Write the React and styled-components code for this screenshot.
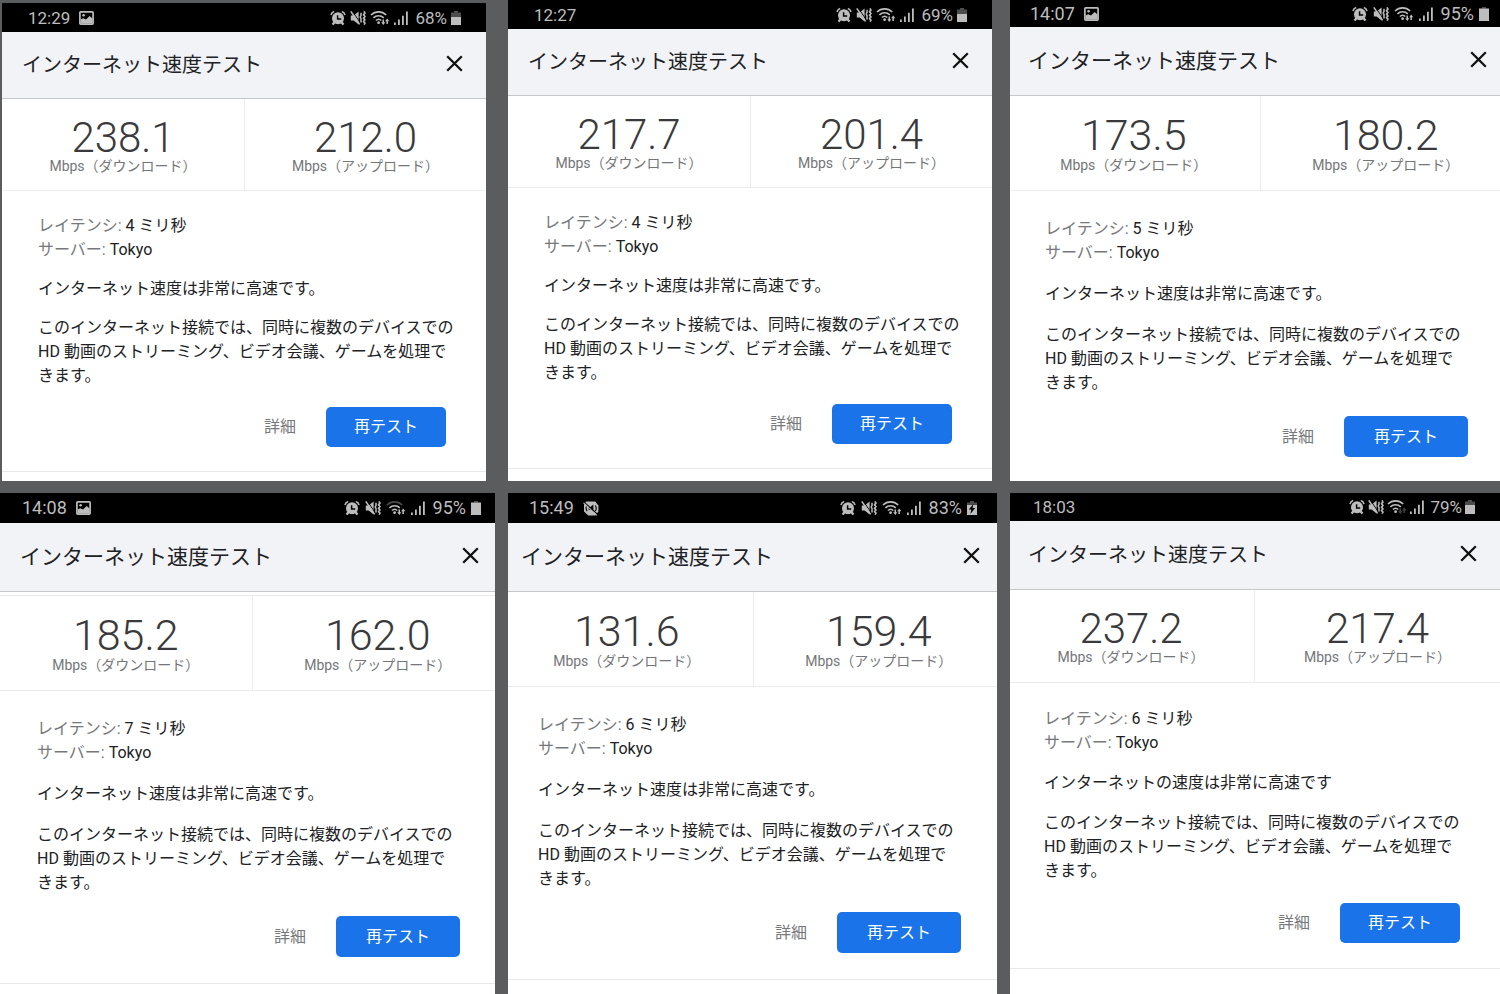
import React from 'react';
import styled, { createGlobalStyle, ThemeProvider } from 'styled-components';

const GlobalStyle = createGlobalStyle`
  * {
    box-sizing: border-box;
  }

  body {
    margin: 0;
    background: #5b5c5e;
    color: #202124;
    font-family: Roboto, 'Noto Sans CJK JP', sans-serif;
    font-size: 16px;
    line-height: 24px;
  }

  h2, h3, p, dl, dd {
    margin: 0;
    font-size: inherit;
    font-weight: 400;
  }

  button {
    border: 0;
    padding: 0;
    background: none;
    font: inherit;
    cursor: pointer;
  }
`;

const compact = {
  statusFont: 17,
  statusGap: 4,
  titleFont: 20,
  header: 67,
  side: 20,
  closeSide: 23,
  number: 42,
  numberLine: 37,
  labelLine: 20,
  resultsBottom: 14,
  bodyTop: 23,
  bodySide: 36,
  gap: 15,
  actionsTop: 19,
  actionsSide: 40,
  button: 40,
  buttonSide: 28,
  bodyBottom: 24,
};

const medium = {
  ...compact,
  statusGap: 3,
  header: 69,
  resultsBottom: 15,
  bodyTop: 24,
  gap: 16,
  actionsTop: 20,
  bodyBottom: 25,
};

const large = {
  statusFont: 18,
  statusGap: 5,
  titleFont: 21,
  header: 69,
  side: 20,
  closeSide: 24,
  number: 43,
  numberLine: 38,
  labelLine: 22,
  resultsBottom: 14,
  bodyTop: 26,
  bodySide: 37,
  gap: 17,
  actionsTop: 21,
  actionsSide: 43,
  button: 41,
  buttonSide: 30,
  bodyBottom: 26,
};

const Board = styled.main`
  display: grid;
  grid-template-rows: 481fr 501fr;
  gap: 12px;
  height: 100vh;
`;

const Row = styled.div`
  display: flex;
  min-height: 0;
`;

const Screen = styled.section`
  flex: ${p => p.$grow} 1 0;
  min-width: 0;
  margin-left: ${p => p.$gutter}px;
  margin-top: ${p => p.$top || 0}px;
  overflow: hidden;
  background: #fff;
`;

const Display = styled.div`
  margin: 0 -${p => p.$cropRight || 0}px 0 -${p => p.$cropLeft || 0}px;
`;

const StatusBar = styled.div`
  display: flex;
  align-items: center;
  justify-content: space-between;
  height: ${p => p.$height}px;
  padding: 0 ${p => p.$right}px 0 ${p => p.$left}px;
  background: #000;
  color: #bdbdbd;
  font-size: ${p => p.theme.statusFont}px;
`;

const StatusGroup = styled.div`
  display: flex;
  align-items: center;
  gap: ${p => p.$gap || p.theme.statusGap}px;

  svg {
    display: block;
    flex: none;
  }
`;

const Percent = styled.span`
  margin-left: 3px;
`;

const Header = styled.header`
  display: flex;
  align-items: center;
  justify-content: space-between;
  height: ${p => p.theme.header}px;
  padding: 0 ${p => p.theme.closeSide}px 0 ${p => p.theme.side}px;
  background: #f2f3f6;
  border-bottom: 1px solid #c6c7ca;
`;

const Title = styled.h2`
  font-size: ${p => p.theme.titleFont}px;
`;

const CloseButton = styled.button`
  padding-bottom: 3px;
  color: #111;

  svg {
    display: block;
  }
`;

const Peek = styled.div`
  height: 4px;
  border-bottom: 1px solid #e8e9eb;
`;

const Results = styled.div`
  display: grid;
  grid-template-columns: 1fr 1fr;
  border-bottom: 1px solid #ebecee;
`;

const Result = styled.div`
  padding: 20px 0 ${p => p.theme.resultsBottom}px;
  text-align: center;

  & + & {
    border-left: 1px solid #ebecee;
  }
`;

const Speed = styled.div`
  color: #3a3a3c;
  font-size: ${p => p.theme.number}px;
  font-weight: 300;
  line-height: ${p => p.theme.numberLine}px;
`;

const Unit = styled.div`
  color: #757679;
  font-size: 14px;
  line-height: ${p => p.theme.labelLine}px;
`;

const Body = styled.div`
  padding: ${p => p.theme.bodyTop}px 24px ${p => p.theme.bodyBottom}px ${p => p.theme.bodySide}px;
  border-bottom: 1px solid #e8e9eb;
`;

const Facts = styled.dl`
  div {
    display: flex;
    gap: 4px;
  }

  dt {
    color: #77787b;
  }
`;

const Text = styled.p`
  max-width: 420px;
  margin-top: ${p => p.theme.gap}px;
`;

const Actions = styled.div`
  display: flex;
  justify-content: flex-end;
  gap: 30px;
  margin-top: ${p => p.theme.actionsTop}px;
  margin-right: ${p => p.theme.actionsSide - 24}px;
`;

const DetailsButton = styled.button`
  color: #77787b;
`;

const RetestButton = styled.button`
  height: ${p => p.theme.button}px;
  padding: 0 ${p => p.theme.buttonSide}px;
  border-radius: 5px;
  background: #1a73e8;
  color: #fff;
`;

const AlarmIcon = () => (
  <svg width="16" height="16" viewBox="0 0 16 16" fill="none" stroke="currentColor">
    <path d="M1 5C1.4 3.2 2.4 2 4.2 1.5M15 5c-.4-1.8-1.4-3-3.2-3.5" strokeWidth="1.6" />
    <circle cx="8" cy="8.3" r="6" fill="currentColor" stroke="none" />
    <path d="M4.4 12.2 2.6 14.6M11.6 12.2l1.8 2.4" strokeWidth="2.4" />
    <path d="M7.6 5.2v3.9h3.6" stroke="#000" strokeWidth="1.5" />
  </svg>
);

const MuteVibrateIcon = () => (
  <svg width="16" height="16" viewBox="0 0 16 16" fill="none" stroke="currentColor">
    <path d="M.8 5.4h2.8L8.6 1.6v12.8l-5-3.8H.8z" fill="currentColor" stroke="none" />
    <path d="M2.2 1 10 12.4" stroke="#000" strokeWidth="1" />
    <path d="M.8 1.4 9.6 14.4" strokeWidth="1.6" />
    <path d="M11 2.8v2.8l-.8 1.4.8 1.5v3.9" strokeWidth="1.5" />
    <path d="m14 1.4.9 1.7-1.3 1.7 1.3 1.7-1.3 1.7 1.3 1.7-1.3 1.7 1.3 1.6-.8 1.4" strokeWidth="1.7" />
  </svg>
);

const WifiIcon = ({ idle, weak }) => (
  <svg width="20" height="16" viewBox="0 0 20 16" fill="none" stroke="currentColor">
    <path d="M1 5c4.2-4.2 11-4.2 15.2 0" strokeWidth="1.6" opacity={weak ? 0.4 : 1} />
    <path d="M3.4 7.9c3-2.9 7.4-2.9 10.4 0" strokeWidth="1.6" />
    <path d="M5.9 10.5c1.7-1.6 3.7-1.6 5.4 0" strokeWidth="1.6" />
    <circle cx="8.6" cy="12.7" r="1.4" fill="currentColor" stroke="none" />
    <g fill="currentColor" stroke="none" opacity={idle ? 0.35 : 1}>
      <path d="M12.5 9.4h1.5v2.8h1.3l-2 2.8-2.1-2.8h1.3z" />
      <path d="M16.4 14h1.5v-2.8h1.4l-2.1-2.8-2.1 2.8h1.3z" />
    </g>
  </svg>
);

const SignalIcon = () => (
  <svg width="14" height="14" viewBox="0 0 14 14" fill="currentColor">
    <path d="M0 11.5h1.8V14H0zM4 8.5h1.8V14H4zM8 4.8h1.8V14H8zM12 .5h1.8V14H12z" />
  </svg>
);

const BatteryIcon = ({ level, charging }) => {
  const top = 2 + Math.round((100 - level) / 8);
  return (
    <svg width="10" height="14" viewBox="0 0 10 14" fill="currentColor">
      <path d="M3 0h4v1.6h3V14H0V1.6h3z" opacity="0.4" />
      <rect y={level > 90 ? 1.6 : top} width="10" height="12.4" />
      {charging && <path d="M6.4 3 1.8 8.6h2.5L3.4 13l4.8-6H5.6z" fill="#000" />}
    </svg>
  );
};

const PictureIcon = () => (
  <svg width="15" height="14" viewBox="0 0 15 14">
    <rect x="0.9" y="0.9" width="13.2" height="12.2" rx="0.8" fill="none" stroke="currentColor" strokeWidth="1.7" />
    <path d="M1.6 12.4V8.4l2.6-1.2 2.8 1.2L10.6 5l3 2.6v4.8z" fill="currentColor" />
    <circle cx="4.6" cy="4.2" r="1.3" fill="currentColor" />
  </svg>
);

const MutedPhoneIcon = () => (
  <svg width="16" height="15" viewBox="0 0 16 15" fill="none">
    <path d="M3 .6h9.2l3.2 4v6l-3 3.8H5.4L1 10.4V4z" fill="currentColor" />
    <path d="M3.6 5c-.8 1.8-.6 3.6.6 5.2M12.4 4.4c1 1.8 1 4 0 5.6" stroke="#000" strokeWidth="1.1" />
    <path d="M5.6 6.2 7.4 6l3-2.4v7.2L7.4 9H5.6z" fill="#000" />
    <path d="M1.4 1.4 14.6 13.4" stroke="#000" strokeWidth="1.2" />
    <path d="M.6 2 13.8 14.4" stroke="currentColor" strokeWidth="1.1" />
  </svg>
);

const CloseIcon = () => (
  <svg width="17" height="17" viewBox="0 0 17 17" fill="none" stroke="currentColor" strokeWidth="2.3">
    <path d="M1.2 1.2 15.8 15.8M15.8 1.2 1.2 15.8" />
  </svg>
);

const notices = {
  picture: PictureIcon,
  muted: MutedPhoneIcon,
};

const fast = 'インターネット速度は非常に高速です。';

const rows = [
  [
    {
      time: '12:29', notice: 'picture', battery: 68, down: '238.1', up: '212.0', latency: 4, summary: fast,
      theme: compact, grow: 484, gutter: 2, top: 3, bar: { height: 29, left: 26, right: 25 },
    },
    {
      time: '12:27', battery: 69, down: '217.7', up: '201.4', latency: 4, summary: fast,
      theme: compact, grow: 484, gutter: 22, bar: { height: 29, left: 26, right: 25 },
    },
    {
      time: '14:07', notice: 'picture', battery: 95, down: '173.5', up: '180.2', latency: 5, summary: fast,
      theme: large, grow: 490, gutter: 18, cropLeft: 2, cropRight: 11, bar: { height: 27, left: 22, right: 22 },
    },
  ],
  [
    {
      time: '14:08', notice: 'picture', battery: 95, down: '185.2', up: '162.0', latency: 7, summary: fast,
      theme: large, grow: 495, gutter: 0, cropRight: 8, peek: true, weak: true, bar: { height: 30, left: 22, right: 22 },
    },
    {
      time: '15:49', notice: 'muted', battery: 83, charging: true, down: '131.6', up: '159.4', latency: 6, summary: fast,
      theme: large, grow: 489, gutter: 13, cropLeft: 7, cropRight: 7, bar: { height: 30, left: 28, right: 27 },
    },
    {
      time: '18:03', battery: 79, idle: true, down: '237.2', up: '217.4', latency: 6, summary: 'インターネットの速度は非常に高速です',
      theme: medium, grow: 490, gutter: 13, cropLeft: 2, bar: { height: 28, left: 25, right: 25 },
    },
  ],
];

const SpeedTest = ({ test }) => {
  const Notice = notices[test.notice];
  return (
    <ThemeProvider theme={test.theme}>
      <Screen $grow={test.grow} $gutter={test.gutter} $top={test.top}>
        <Display $cropLeft={test.cropLeft} $cropRight={test.cropRight}>
          <StatusBar $height={test.bar.height} $left={test.bar.left} $right={test.bar.right}>
            <StatusGroup $gap={9}>
              <span>{test.time}</span>
              {Notice && <Notice />}
            </StatusGroup>
            <StatusGroup>
              <AlarmIcon />
              <MuteVibrateIcon />
              <WifiIcon idle={test.idle} weak={test.weak} />
              <SignalIcon />
              <Percent>{test.battery}%</Percent>
              <BatteryIcon level={test.battery} charging={test.charging} />
            </StatusGroup>
          </StatusBar>
          <Header>
            <Title>インターネット速度テスト</Title>
            <CloseButton type="button" aria-label="閉じる">
              <CloseIcon />
            </CloseButton>
          </Header>
          {test.peek && <Peek />}
          <Results>
            <Result>
              <Speed>{test.down}</Speed>
              <Unit>Mbps（ダウンロード）</Unit>
            </Result>
            <Result>
              <Speed>{test.up}</Speed>
              <Unit>Mbps（アップロード）</Unit>
            </Result>
          </Results>
          <Body>
            <Facts>
              <div>
                <dt>レイテンシ:</dt>
                <dd>{test.latency} ミリ秒</dd>
              </div>
              <div>
                <dt>サーバー:</dt>
                <dd>Tokyo</dd>
              </div>
            </Facts>
            <Text as="h3">{test.summary}</Text>
            <Text>
              このインターネット接続では、同時に複数のデバイスでの HD 動画のストリーミング、ビデオ会議、ゲームを処理できます。
            </Text>
            <Actions>
              <DetailsButton type="button">詳細</DetailsButton>
              <RetestButton type="button">再テスト</RetestButton>
            </Actions>
          </Body>
        </Display>
      </Screen>
    </ThemeProvider>
  );
};

const App = () => (
  <>
    <GlobalStyle />
    <Board>
      {rows.map((tests, i) => (
        <Row key={i}>
          {tests.map(test => (
            <SpeedTest key={test.time} test={test} />
          ))}
        </Row>
      ))}
    </Board>
  </>
);

export default App;
